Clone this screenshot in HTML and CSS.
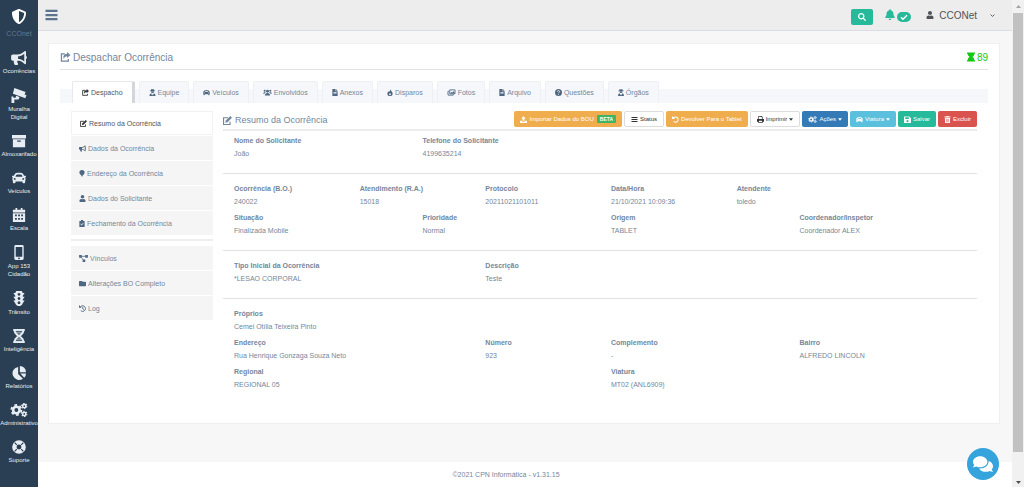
FILE: index.html
```html
<!DOCTYPE html>
<html lang="pt-br">
<head>
<meta charset="utf-8">
<title>CCONet</title>
<link rel="stylesheet" href="styles.css">
</head>
<body>

<svg class="sprite" aria-hidden="true">
<symbol id="shield" viewBox="0 0 512 512"><path d="M466.5 83.7l-192-80a48.15 48.15 0 0 0-36.9 0l-192 80C27.7 91.1 16 108.6 16 128c0 198.5 114.5 335.7 221.5 380.3 11.8 4.9 25.1 4.9 36.9 0C360.1 472.6 496 349.3 496 128c0-19.4-11.7-36.9-29.5-44.3zM256.1 446.3l-.1-381 175.9 73.3c-3.3 151.4-82.1 261.1-175.8 307.7z"/></symbol>
<symbol id="bullhorn" viewBox="0 0 576 512"><path d="M576 240c0-23.63-12.95-44.04-32-55.12V32.01C544 23.26 537.02 0 512 0c-7.12 0-14.19 2.38-19.98 7.02l-85.03 68.03C364.28 109.19 310.66 128 256 128H64c-35.35 0-64 28.65-64 64v96c0 35.35 28.65 64 64 64h33.7c-1.39 10.48-2.18 21.14-2.18 32 0 39.77 9.26 77.35 25.56 110.94 5.19 10.69 16.52 17.06 28.4 17.06h74.28c26.05 0 41.69-29.84 25.9-50.56-16.4-21.52-26.15-48.36-26.15-77.44 0-11.11 1.62-21.79 4.41-32H256c54.66 0 108.28 18.81 150.98 52.95l85.03 68.03a32.023 32.023 0 0 0 19.98 7.02c24.92 0 32-22.78 32-32V295.13C563.05 284.04 576 263.63 576 240zm-96 141.42l-33.05-26.44C392.95 311.78 325.12 288 256 288v-96c69.12 0 136.95-23.78 190.95-66.98L480 98.58v282.84z"/></symbol>
<symbol id="camera" viewBox="0 0 16 16"><path d="M3 0l12 4.200-2.300 6L1.500 6zM14 7l2 .8-1.300 3-2-.8zM5 8.200l3.600 1.400-1 2.600H3V16H0V9h2v1.400h2.300z"/></symbol>
<symbol id="box" viewBox="0 0 16 16"><path d="M0 1h16v4H0zM1 6h14v9H1zM6 7.500v1.300h4V7.500z" fill-rule="evenodd"/></symbol>
<symbol id="car" viewBox="0 0 512 512"><path d="M499.99 176h-59.87l-16.64-41.6C406.38 91.63 365.57 64 319.5 64h-127c-46.06 0-86.88 27.63-103.99 70.4L71.87 176H12.01C4.2 176-1.53 183.34.37 190.91l6 24C7.7 220.25 12.5 224 18.01 224h20.07C24.65 235.73 16 252.78 16 272v48c0 16.12 6.16 30.67 16 41.93V416c0 17.67 14.33 32 32 32h32c17.67 0 32-14.33 32-32v-32h256v32c0 17.67 14.33 32 32 32h32c17.67 0 32-14.33 32-32v-54.07c9.84-11.25 16-25.8 16-41.93v-48c0-19.22-8.65-36.27-22.07-48H494c5.51 0 10.31-3.75 11.64-9.09l6-24c1.89-7.57-3.84-14.91-11.65-14.91zm-352.06-17.83c7.29-18.22 24.94-30.17 44.57-30.17h127c19.63 0 37.28 11.95 44.57 30.17L384 208H128l19.93-49.83zM96 319.8c-19.2 0-32-12.76-32-31.9S76.8 256 96 256s48 28.71 48 47.85-28.8 15.95-48 15.95zm320 0c-19.2 0-48 3.190-48-15.95S396.8 256 416 256s32 12.76 32 31.9-12.8 31.9-32 31.9z"/></symbol>
<symbol id="calendar" viewBox="0 0 16 16"><path fill-rule="evenodd" d="M1 2h3V0h2v2h4V0h2v2h3v3H1zM1 6h14v10H1zM3.500 7.500v2h2v-2zm3.500 0v2h2v-2zm3.500 0v2h2v-2zM3.500 11.500v2h2v-2zm3.500 0v2h2v-2zm3.500 0v2h2v-2z"/></symbol>
<symbol id="phone" viewBox="0 0 10 16"><path fill-rule="evenodd" d="M1.500 0h7Q10 0 10 1.500v13Q10 16 8.500 16h-7Q0 16 0 14.500v-13Q0 0 1.500 0zM1.500 2v10.500h7V2zM5 13.300a.9.9 0 1 0 .01 0z"/></symbol>
<symbol id="traffic" viewBox="0 0 12 16"><path fill-rule="evenodd" d="M3 0h6l1 2h2L10 5v1h2l-2 3v1h2l-2 3Q9 16 6 16T2 13L0 10h2V9L0 6h2V5L0 2h2zM6 2a1.500 1.500 0 1 0 .01 0zM6 6.500a1.500 1.500 0 1 0 .01 0zM6 11a1.500 1.500 0 1 0 .01 0z"/></symbol>
<symbol id="dna" viewBox="0 0 16 16"><path d="M2 0h12v2H2zM2 14h12v2H2zM3 4.500h10M3 11.500h10" stroke="currentColor"/><path d="M3 1q0 4 5 7t5 7M13 1q0 4-5 7t-5 7" fill="none" stroke="currentColor" stroke-width="2.200"/></symbol>
<symbol id="pie" viewBox="0 0 16 16"><path d="M7 1v8l5.500 5.500A7.500 7.500 0 1 1 7 1zM9 0a7 7 0 0 1 7 7H9zM9.500 8.500H16a7 7 0 0 1-2 5z"/></symbol>
<symbol id="cogs" viewBox="0 0 20 16"><g fill="none" stroke="currentColor"><circle cx="7" cy="8" r="3.700" stroke-width="3"/><circle cx="7" cy="8" r="5.700" stroke-width="2.200" stroke-dasharray="3 2.970"/><circle cx="16" cy="3.500" r="1.900" stroke-width="1.800"/><circle cx="16" cy="3.500" r="3" stroke-width="1.200" stroke-dasharray="1.600 1.540"/><circle cx="16" cy="12.500" r="1.900" stroke-width="1.800"/><circle cx="16" cy="12.500" r="3" stroke-width="1.200" stroke-dasharray="1.600 1.540"/></g></symbol>
<symbol id="ring" viewBox="0 0 16 16"><circle cx="8" cy="8" r="5.300" fill="none" stroke="currentColor" stroke-width="5"/><path d="M3 3l2.500 2.500M13 3l-2.500 2.500M3 13l2.500-2.500M13 13l-2.500-2.500" stroke="#2a3f54" stroke-width="1.300"/></symbol>
<symbol id="search" viewBox="0 0 512 512"><path d="M505 442.7L405.3 343c-4.5-4.5-10.6-7-17-7H372c27.6-35.3 44-79.7 44-128C416 93.1 322.9 0 208 0S0 93.1 0 208s93.1 208 208 208c48.3 0 92.7-16.4 128-44v16.3c0 6.400 2.500 12.5 7 17l99.7 99.7c9.400 9.400 24.600 9.400 33.900 0l28.300-28.300c9.400-9.400 9.400-24.600.1-34zM208 336c-70.7 0-128-57.2-128-128 0-70.7 57.2-128 128-128 70.7 0 128 57.2 128 128 0 70.7-57.2 128-128 128z"/></symbol>
<symbol id="bell" viewBox="0 0 448 512"><path d="M224 512c35.32 0 63.97-28.65 63.97-64H160.03c0 35.35 28.65 64 63.97 64zm215.39-149.71c-19.32-20.76-55.47-51.99-55.47-154.29 0-77.7-54.48-139.9-127.94-155.16V32c0-17.67-14.32-32-31.98-32s-31.98 14.33-31.98 32v20.840C118.56 68.1 64.08 130.3 64.08 208c0 102.3-36.15 133.53-55.47 154.29-6 6.45-8.66 14.16-8.61 21.71.11 16.4 12.98 32 32.1 32h383.8c19.12 0 32-15.6 32.1-32 .05-7.55-2.61-15.27-8.61-21.71z"/></symbol>
<symbol id="check" viewBox="0 0 16 16"><path d="M2 8.500l4 4 8-8" fill="none" stroke="currentColor" stroke-width="3"/></symbol>
<symbol id="user" viewBox="0 0 448 512"><path d="M224 256c70.7 0 128-57.3 128-128S294.7 0 224 0 96 57.3 96 128s57.3 128 128 128zm89.6 32h-16.7c-22.2 10.2-46.9 16-72.9 16s-50.6-5.8-72.9-16h-16.7C60.2 288 0 348.2 0 422.4V464c0 26.5 21.5 48 48 48h352c26.5 0 48-21.5 48-48v-41.6c0-74.2-60.2-134.4-134.4-134.4z"/></symbol>
<symbol id="chevron" viewBox="0 0 16 16"><path d="M2 5l6 6 6-6" fill="none" stroke="currentColor" stroke-width="3"/></symbol>
<symbol id="share" viewBox="0 0 16 16"><path d="M7 3H1.500v11.500h11V11" fill="none" stroke="currentColor" stroke-width="2"/><path d="M10.500 0L16 4.700l-5.500 4.800V6.800Q6.500 6.500 5 11 3 3 10.500 2.700z"/></symbol>
<symbol id="hourglass" viewBox="0 0 14 16"><path d="M0 0h14v2.500h-1Q13 6 9.500 8q3.500 2 3.500 5.500h1V16H0v-2.500h1Q1 10 4.500 8 1 6 1 2.500H0z"/></symbol>
<symbol id="users" viewBox="0 0 20 16"><circle cx="10" cy="5" r="3.300"/><path d="M4 15q0-6 6-6t6 6z"/><circle cx="3.500" cy="4" r="2.300"/><circle cx="16.500" cy="4" r="2.300"/><path d="M0 11q0-4 5-4l1 1q-2 1-3 3zM20 11q0-4-5-4l-1 1q2 1 3 3z"/></symbol>
<symbol id="secret" viewBox="0 0 14 16"><path d="M4 0q3 1.500 6 0l1 3.500h2V5H1V3.500h2zM3.500 5.500h7Q10.500 9 7 9T3.500 5.500zM0 16q0-6 4-6.500L6 15l1-4 1 4 2-5.500q4 .5 4 6.500z"/></symbol>
<symbol id="file" viewBox="0 0 12 16"><path fill-rule="evenodd" d="M0 0h7v5h5v11H0zM8 0l4 4H8zM2.500 7v1.500h7V7zm0 3v1.500h7V10z"/></symbol>
<symbol id="fire" viewBox="0 0 12 16"><path fill-rule="evenodd" d="M7 0q0 3 3 5.500 2 2 2 4.500 0 6-6 6t-6-6q0-3 2.500-5l1 2Q7 4 7 0zM6 9q-3 2.500-2 4 2 2 4 0 1-1.500-2-4z"/></symbol>
<symbol id="images" viewBox="0 0 18 16"><path d="M5 2h12v9H5zM3 5H1v9h12v-2" fill="none" stroke="currentColor" stroke-width="2"/><path d="M6 10l3-3 2 1 3-3 2 3v2z"/></symbol>
<symbol id="help" viewBox="0 0 16 16"><circle cx="8" cy="8" r="8"/><path d="M5.500 6Q6 3.500 8 3.500T10.500 6Q10.500 7.500 8 9M8 11v2" fill="none" stroke="#fff" stroke-width="1.800"/></symbol>
<symbol id="edit" viewBox="0 0 16 16"><path d="M9 3H1v12h11.500v-5" fill="none" stroke="currentColor" stroke-width="2"/><path d="M13 0l3 3-8 8-4 1 1-4z"/></symbol>
<symbol id="pin" viewBox="0 0 12 16"><path d="M6 0q6 0 6 6 0 3-4.500 6.500L6 16l-1.500-3.500Q0 9 0 6 0 0 6 0z"/></symbol>
<symbol id="clip" viewBox="0 0 12 16"><path fill-rule="evenodd" d="M0 2h3.500V0h5v2H12v14H0zM2.500 9L5 12.500 10 7 9 6l-4 4-1.500-2z"/></symbol>
<symbol id="diagram" viewBox="0 0 20 16"><path d="M0 0h6v6H0zM14 0h6v6h-6zM8 10h6v6H8z"/><path d="M5 3h10M4 4l6 8" stroke="currentColor" stroke-width="1.800"/></symbol>
<symbol id="folder" viewBox="0 0 512 512"><path d="M464 128H272l-64-64H48C21.500 64 0 85.500 0 112v288c0 26.500 21.500 48 48 48h416c26.500 0 48-21.500 48-48V176c0-26.500-21.500-48-48-48z"/></symbol>
<symbol id="history" viewBox="0 0 16 16"><path d="M3 4.500A6.500 6.500 0 1 1 4 13M8.500 4v4.500l3 2" fill="none" stroke="currentColor" stroke-width="2"/><path d="M0 0l6 6H0z"/></symbol>
<symbol id="undo" viewBox="0 0 16 16"><path d="M3 5a6 6 0 1 1 .5 7" fill="none" stroke="currentColor" stroke-width="2.400"/><path d="M0 0l7 7H0z"/></symbol>
<symbol id="upload" viewBox="0 0 16 16"><path d="M8 0l5 6h-3v5H6V6H3zM0 11h5v2h6v-2h5v5H0z"/></symbol>
<symbol id="bars" viewBox="0 0 16 16"><path d="M0 1h16v3H0zM0 6.500h16v3H0zM0 12h16v3H0z"/></symbol>
<symbol id="lines" viewBox="0 0 14 14"><path d="M1 2h12v2H1zM1 6h12v2H1zM1 10h12v2H1z"/></symbol>
<symbol id="print" viewBox="0 0 16 16"><path fill-rule="evenodd" d="M3 0h8l2 2v5h3v6h-3v3H3v-3H0V7h3zM4.500 1.500V7h7V3h-2V1.500zM4.500 11v3.500h7V11z"/></symbol>
<symbol id="save" viewBox="0 0 16 16"><path fill-rule="evenodd" d="M0 1h12l4 4v11H0zM3 3v4h8V3zM8 9a2.500 2.500 0 1 0 .01 0z"/></symbol>
<symbol id="trash" viewBox="0 0 14 16"><path fill-rule="evenodd" d="M0 1h4l1-1h4l1 1h4v2.500H0zM1 4.500h12L12.500 16h-11zM4 6.500V14h1V6.500zm2.500 0V14h1V6.500zm2.500 0V14h1V6.500z"/></symbol>
<symbol id="caret" viewBox="0 0 10 6"><path d="M0 0h10L5 6z"/></symbol>
<symbol id="comments" viewBox="0 0 576 512"><path d="M416 192c0-88.4-93.1-160-208-160S0 103.6 0 192c0 34.3 14.1 65.9 38 92-13.4 30.2-35.5 54.2-35.8 54.5-2.2 2.3-2.8 5.7-1.5 8.7S4.8 352 8 352c36.6 0 66.9-12.3 88.7-25 32.2 15.7 70.3 25 111.3 25 114.9 0 208-71.6 208-160zm122 220c23.9-26 38-57.7 38-92 0-66.9-53.5-124.2-129.3-148.1.9 6.6 1.3 13.3 1.3 20.1 0 105.9-107.7 192-240 192-10.8 0-21.3-.8-31.7-1.9C207.8 439.6 281.8 480 368 480c41 0 79.1-9.2 111.3-25 21.8 12.7 52.1 25 88.7 25 3.2 0 6.1-1.9 7.3-4.8 1.3-2.9.7-6.3-1.5-8.7-.3-.3-22.4-24.2-35.8-54.5z"/></symbol>
</svg>

<div class="app">
<nav class="sidebar">
<a class="brand" href="#"><svg><use href="#shield"/></svg>CCOnet</a>
<a href="#"><svg><use href="#bullhorn"/></svg>Ocorrências</a>
<a href="#" class="tall"><svg><use href="#camera"/></svg>Muralha<br>Digital</a>
<a href="#"><svg><use href="#box"/></svg>Almoxarifado</a>
<a href="#"><svg><use href="#car"/></svg>Veículos</a>
<a href="#"><svg><use href="#calendar"/></svg>Escala</a>
<a href="#" class="tall"><svg><use href="#phone"/></svg>App 153<br>Cidadão</a>
<a href="#" class="tall"><svg><use href="#traffic"/></svg>Trânsito</a>
<a href="#"><svg><use href="#dna"/></svg>Inteligência</a>
<a href="#"><svg><use href="#pie"/></svg>Relatórios</a>
<a href="#"><svg><use href="#cogs"/></svg>Administrativo</a>
<a href="#"><svg><use href="#ring"/></svg>Suporte</a>
</nav>

<div class="page">
<header class="topbar">
<button class="toggle" aria-label="Menu"><svg><use href="#bars"/></svg></button>
<button class="find" aria-label="Pesquisar"><svg><use href="#search"/></svg></button>
<a class="alerts" href="#" aria-label="Alertas"><svg><use href="#bell"/></svg><span class="ok"><svg><use href="#check"/></svg></span></a>
<a class="account" href="#"><svg><use href="#user"/></svg>CCONet<svg class="down"><use href="#chevron"/></svg></a>
</header>

<main>
<div class="panel">
<div class="panel_title">
<h1><svg><use href="#share"/></svg>Despachar Ocorrência</h1>
<span class="timer"><svg><use href="#hourglass"/></svg>89</span>
</div>

<nav class="tabs">
<a href="#" class="active"><svg><use href="#share"/></svg>Despacho</a>
<a href="#"><svg><use href="#secret"/></svg>Equipe</a>
<a href="#"><svg><use href="#car"/></svg>Veículos</a>
<a href="#"><svg class="wide"><use href="#users"/></svg>Envolvidos</a>
<a href="#"><svg class="thin"><use href="#file"/></svg>Anexos</a>
<a href="#"><svg class="thin"><use href="#fire"/></svg>Disparos</a>
<a href="#"><svg class="wide"><use href="#images"/></svg>Fotos</a>
<a href="#"><svg class="thin"><use href="#file"/></svg>Arquivo</a>
<a href="#"><svg><use href="#help"/></svg>Questões</a>
<a href="#"><svg class="thin"><use href="#secret"/></svg>Órgãos</a>
</nav>

<div class="content">
<nav class="menu">
<a href="#" class="active"><svg><use href="#edit"/></svg>Resumo da Ocorrência</a>
<a href="#"><svg><use href="#bullhorn"/></svg>Dados da Ocorrência</a>
<a href="#"><svg class="thin"><use href="#pin"/></svg>Endereço da Ocorrência</a>
<a href="#"><svg><use href="#user"/></svg>Dados do Solicitante</a>
<a href="#"><svg class="thin"><use href="#clip"/></svg>Fechamento da Ocorrência</a>
<hr>
<a href="#"><svg class="wide"><use href="#diagram"/></svg>Vínculos</a>
<a href="#"><svg><use href="#folder"/></svg>Alterações BO Completo</a>
<a href="#"><svg><use href="#history"/></svg>Log</a>
</nav>

<div class="details">
<div class="heading">
<h2><svg><use href="#edit"/></svg>Resumo da Ocorrência</h2>
<div class="buttons">
<button class="orange"><svg><use href="#upload"/></svg>Importar Dados do BOU<span class="beta">BETA</span></button>
<button class="white"><svg><use href="#lines"/></svg>Status</button>
<button class="orange"><svg><use href="#undo"/></svg>Devolver Para o Tablet</button>
<button class="white"><svg><use href="#print"/></svg>Imprimir<svg class="caret"><use href="#caret"/></svg></button>
<button class="blue"><svg class="wide"><use href="#cogs"/></svg>Ações<svg class="caret"><use href="#caret"/></svg></button>
<button class="cyan"><svg><use href="#car"/></svg>Viatura<svg class="caret"><use href="#caret"/></svg></button>
<button class="green"><svg><use href="#save"/></svg>Salvar</button>
<button class="red"><svg><use href="#trash"/></svg>Excluir</button>
</div>
</div>

<dl class="group">
<div class="w3"><dt>Nome do Solicitante</dt><dd>João</dd></div>
<div class="w9"><dt>Telefone do Solicitante</dt><dd>4199635214</dd></div>
</dl>
<dl class="group">
<div class="w2"><dt>Ocorrência (B.O.)</dt><dd>240022</dd></div>
<div class="w2"><dt>Atendimento (R.A.)</dt><dd>15018</dd></div>
<div class="w2"><dt>Protocolo</dt><dd>20211021101011</dd></div>
<div class="w2"><dt>Data/Hora</dt><dd>21/10/2021 10:09:36</dd></div>
<div class="w4"><dt>Atendente</dt><dd>toledo</dd></div>
<div class="w3"><dt>Situação</dt><dd>Finalizada Mobile</dd></div>
<div class="w3"><dt>Prioridade</dt><dd>Normal</dd></div>
<div class="w3"><dt>Origem</dt><dd>TABLET</dd></div>
<div class="w3"><dt>Coordenador/Inspetor</dt><dd>Coordenador ALEX</dd></div>
</dl>
<dl class="group">
<div class="w4"><dt>Tipo Inicial da Ocorrência</dt><dd>*LESAO CORPORAL</dd></div>
<div class="w8"><dt>Descrição</dt><dd>Teste</dd></div>
</dl>
<dl class="group">
<div class="w12"><dt>Próprios</dt><dd>Cemei Otília Teixeira Pinto</dd></div>
<div class="w4"><dt>Endereço</dt><dd>Rua Henrique Gonzaga Souza Neto</dd></div>
<div class="w2"><dt>Número</dt><dd>923</dd></div>
<div class="w3"><dt>Complemento</dt><dd>-</dd></div>
<div class="w3"><dt>Bairro</dt><dd>ALFREDO LINCOLN</dd></div>
<div class="w6"><dt>Regional</dt><dd>REGIONAL 05</dd></div>
<div class="w6"><dt>Viatura</dt><dd>MT02 (ANL6909)</dd></div>
</dl>
</div>
</div>
</div>
</main>

<footer>©2021 CPN Informática - v1.31.15</footer>
</div>

<div class="scrollbar">
<svg class="up"><use href="#caret"/></svg>
<div class="thumb"></div>
<svg><use href="#caret"/></svg>
</div>
</div>

<button class="chat" aria-label="Chat"><svg><use href="#comments"/></svg></button>

</body>
</html>
```
FILE: styles.css
```css
* {
	box-sizing:border-box;
}
body {
	margin:0;
	font-family:"Liberation Sans",Arial,sans-serif;
	font-size:7px;
	line-height:13px;
	color:#73879c;
	background-color:#ffffff;
}
a {
	color:inherit;
	text-decoration:none;
}
button {
	font-family:inherit;
	font-size:6px;
	border:none;
	padding:0;
	cursor:pointer;
}
h1, h2, dl, dd {
	margin:0;
	font-weight:normal;
}
svg {
	width:7px;
	height:7px;
	fill:currentColor;
	flex-shrink:0;
}
.sprite {
	display:none;
}
.wide {
	width:9px;
}
.thin {
	width:6px;
}
.app {
	display:flex;
	min-height:100vh;
}

/* left bar */
.sidebar {
	width:38px;
	flex-shrink:0;
	background-color:#2a3f54;
	color:#e7edf2;
	font-size:6px;
	line-height:8px;
}
.sidebar a {
	display:flex;
	flex-direction:column;
	align-items:center;
	text-align:center;
	margin-bottom:13px;
}
.sidebar svg {
	width:18px;
	height:14px;
	margin-bottom:2px;
}
.sidebar .tall svg {
	height:15px;
}
.sidebar .brand {
	padding-top:9px;
	font-size:7px;
	color:#62778c;
}
.sidebar .brand svg {
	height:15px;
	margin-bottom:6px;
	color:#ffffff;
}

.page {
	flex:1;
	min-width:0;
	display:flex;
	flex-direction:column;
	background-color:#f7f7f7;
}
.topbar {
	display:flex;
	align-items:center;
	height:31px;
	padding:0 17px 0 7px;
	background-color:#ededed;
	border-bottom:1px solid #d9dee4;
}
.toggle {
	margin-right:auto;
	background:none;
	color:#5a738e;
}
.toggle svg {
	display:block;
	width:13px;
	height:12px;
}
.find {
	width:22px;
	height:16px;
	margin-top:3px;
	background-color:#26b99a;
	color:#ffffff;
	border-radius:2px;
}
.find svg {
	display:block;
	width:8px;
	height:8px;
	margin:0 auto;
}
.alerts {
	display:flex;
	margin-left:12px;
	color:#26b99a;
}
.alerts svg {
	width:10px;
	height:11px;
}
.ok {
	display:flex;
	align-items:center;
	justify-content:center;
	width:14px;
	height:10px;
	margin:3px 0 0 2px;
	border-radius:5px;
	background-color:#26b99a;
	color:#ffffff;
}
.alerts .ok svg {
	width:8px;
	height:8px;
}
.account {
	display:flex;
	align-items:center;
	margin-left:15px;
	font-size:10px;
	color:#515356;
}
.account svg {
	width:8px;
	height:8px;
	margin-right:5px;
}
.account .down {
	width:5px;
	height:5px;
	margin:0 0 0 13px;
}

main {
	flex:1;
	padding:12px 12px 38px 10px;
}
.panel {
	min-height:381px;
	padding:5px 11px;
	background-color:#ffffff;
	border:1px solid #eeeff1;
}
.panel_title {
	display:flex;
	justify-content:space-between;
	align-items:center;
	height:21px;
	padding-bottom:4px;
	border-bottom:1px solid #e0e3e6;
}
h1, h2, .timer {
	display:flex;
	align-items:center;
	font-size:10px;
}
h1 svg, .timer svg {
	width:11px;
	height:10px;
	margin-right:2px;
}
.timer {
	color:#12c912;
}
.timer svg {
	width:8px;
}

.tabs {
	display:flex;
	gap:4px;
	margin-top:11px;
	padding-left:12px;
	background:linear-gradient(#ffffff 8px,#f5f7fa 8px);
}
.tabs a {
	display:flex;
	align-items:center;
	height:22px;
	padding:0 9px;
	background-color:#f5f7fa;
	border:1px solid #eef1f4;
	border-bottom:none;
	border-radius:2px 2px 0 0;
}
.tabs svg, .menu svg {
	margin-right:2px;
	color:#4f6781;
}
.tabs .active {
	background-color:#ffffff;
	border-color:#e6e9ed;
	border-right:3px solid #d3d6da;
	color:#555555;
}
.active svg {
	color:#333333;
}

.content {
	display:flex;
	gap:10px;
	padding:8px 11px 0 11px;
}
.menu {
	width:142px;
	flex-shrink:0;
}
.menu a {
	display:flex;
	align-items:center;
	height:24px;
	margin-bottom:1px;
	padding-left:8px;
	background-color:#f5f5f5;
}
.menu .active {
	background-color:#ffffff;
	border:1px solid #f2f2f2;
	color:#555555;
}
.menu hr {
	margin:4px 0 5px;
	border:none;
	border-top:2px solid #eeeeee;
}
.details {
	flex:1;
	min-width:0;
}
.heading {
	display:flex;
	justify-content:space-between;
	height:20px;
	border-bottom:2px solid #eaecee;
}
h2 {
	font-size:9px;
}
h2 svg {
	width:9px;
	height:9px;
	margin-right:3px;
}
.buttons {
	display:flex;
	gap:2px;
}
.buttons button {
	display:flex;
	align-items:center;
	height:16px;
	padding:0 6px;
	border-radius:2px;
	color:#ffffff;
	white-space:nowrap;
}
.buttons svg {
	margin-right:2px;
}
.buttons .caret {
	width:4px;
	height:3px;
	margin:1px 0 0 2px;
}
.beta {
	margin-left:3px;
	padding:0 3px;
	font-size:5px;
	line-height:8px;
	font-weight:bold;
	background-color:#3fb563;
	border-radius:1px;
}
.orange { background-color:#f0ad4e; }
.blue { background-color:#337ab7; }
.cyan { background-color:#5bc0de; }
.green { background-color:#26b99a; }
.red { background-color:#d9534f; }
.buttons .white {
	background-color:#ffffff;
	border:1px solid #dddddd;
	color:#333333;
}

.group {
	display:grid;
	grid-template-columns:repeat(12,1fr);
	row-gap:3px;
	padding:8px 0 13px;
	border-bottom:1px solid #dfe2e6;
}
.heading + .group {
	padding-top:3px;
}
.group:last-child {
	border-bottom:none;
}
.group div {
	padding-left:11px;
	white-space:nowrap;
}
dt {
	font-weight:bold;
}
.w2 { grid-column:span 2; }
.w3 { grid-column:span 3; }
.w4 { grid-column:span 4; }
.w6 { grid-column:span 6; }
.w8 { grid-column:span 8; }
.w9 { grid-column:span 9; }
.w12 { grid-column:span 12; }

footer {
	padding:6px 38px 7px 0;
	background-color:#ffffff;
	text-align:center;
}

.scrollbar {
	display:flex;
	flex-direction:column;
	align-items:center;
	width:12px;
	padding:5px 0 4px;
	background-color:#f1f1f1;
	color:#505050;
}
.scrollbar svg {
	width:5px;
	height:3px;
}
.scrollbar .up {
	transform:rotate(180deg);
	color:#a3a3a3;
}
.thumb {
	flex:1;
	width:10px;
	margin:5px 0 29px;
	background-color:#c1c1c1;
}
.chat {
	position:fixed;
	right:25px;
	bottom:7px;
	width:32px;
	height:32px;
	border-radius:50%;
	background-color:#35a3dc;
	color:#ffffff;
}
.chat svg {
	display:block;
	width:20px;
	height:18px;
	margin:0 auto;
}
```
